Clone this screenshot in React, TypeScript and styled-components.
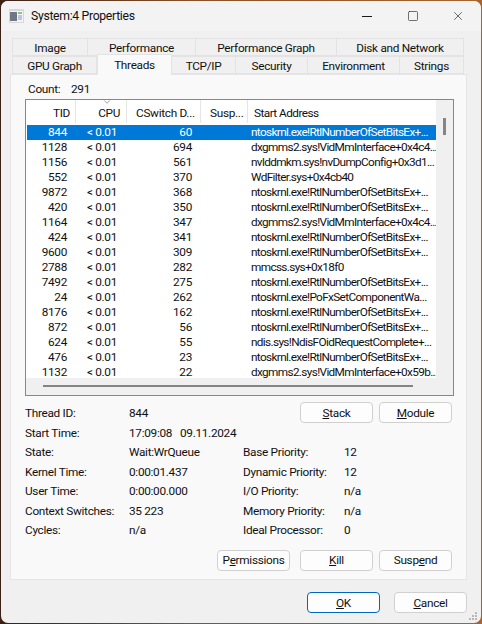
import React from 'react';
import styled, { createGlobalStyle } from 'styled-components';
import { Square, X, ChevronDown } from 'lucide-react';

const GlobalStyle = createGlobalStyle`
  html, body {
    margin: 0;
    height: 100%;
    overflow: hidden;
    background: linear-gradient(90deg, #3a2016 0%, #8a5028 40%, #a8642e 100%);
  }
  body {
    font-family: Roboto, "Noto Sans", sans-serif;
    font-size: 11.8px;
    letter-spacing: -0.3px;
    color: #111;
  }
`;

const Win = styled.div`
  box-sizing: border-box;
  margin: 1px;
  height: 622px;
  border-radius: 7px;
  background: #f0f0f0;
  display: flex;
  flex-direction: column;
  position: relative;
  overflow: hidden;
`;

const TitleBar = styled.div`
  height: 30px;
  background: #f3f3f3;
  display: flex;
  align-items: center;
  padding: 0 16px 0 8px;
  flex-shrink: 0;
`;

const AppIcon = styled.svg`
  width: 15px;
  height: 14px;
  margin-right: 7px;
  margin-top: -1px;
`;

const Title = styled.div`
  flex: 1;
  margin-top: -1px;
  font-size: 12.2px;
`;

const WinButtons = styled.div`
  display: flex;
  align-items: center;
  svg { display: block; color: #1a1a1a; }
`;

const MinLine = styled.div`
  width: 10px;
  height: 1px;
  background: #1a1a1a;
  margin-right: 35px;
`;

const MaxIcon = styled(Square)`
  margin-right: 32px;
`;

const TabArea = styled.div`
  padding: 7px 0 0 11px;
  width: 452px;
  position: relative;
  z-index: 1;
`;

const TabRow = styled.div`
  display: flex;
  height: 18px;
`;

const Tab = styled.div<{ $w: number; $active?: boolean }>`
  box-sizing: border-box;
  width: ${(p) => p.$w}px;
  display: flex;
  align-items: center;
  justify-content: center;
  background: ${(p) => (p.$active ? '#f9f9f9' : '#f0f0f0')};
  border: 1px solid #e3e3e3;
  border-left-width: ${(p) => (p.$active ? 1 : 0)}px;
  border-bottom: ${(p) => (p.$active ? '0' : '1px solid #e3e3e3')};
  height: ${(p) => (p.$active ? 21 : 18)}px;
  margin-top: ${(p) => (p.$active ? -2 : 0)}px;
  padding: ${(p) => (p.$active ? '0 0 1px' : '1px 0 0')};
  position: relative;
  z-index: ${(p) => (p.$active ? 2 : 0)};
  &:first-child { border-left-width: 1px; }
`;

const Panel = styled.div`
  box-sizing: border-box;
  margin-left: 9px;
  width: 457px;
  height: 506px;
  border: 1px solid #e5e5e5;
  background: #f9f9f9;
  padding: 6px 14px 0 14px;
  flex-shrink: 0;
  display: flex;
  flex-direction: column;
`;

const CountRow = styled.div`
  box-sizing: border-box;
  display: grid;
  grid-template-columns: 43px 1fr;
  height: 18px;
  align-items: center;
  padding: 0 0 2px 3px;
`;

const ListBox = styled.div`
  box-sizing: border-box;
  width: 429px;
  height: 297px;
  border: 1px solid #828790;
  background: #fff;
  display: grid;
  grid-template-columns: 1fr 17px;
  grid-template-rows: 1fr 17px;
`;

const ListMain = styled.div`
  padding-left: 1px;
  overflow: hidden;
`;

const HeaderRow = styled.div`
  display: grid;
  grid-template-columns: 49px 51px 74px 47px 1fr;
  height: 25px;
`;

const HeaderCell = styled.div<{ $right?: boolean; $pad: number; $tight?: boolean }>`
  box-sizing: border-box;
  height: 23px;
  display: flex;
  align-items: center;
  justify-content: ${(p) => (p.$right ? 'flex-end' : 'flex-start')};
  padding: ${(p) => (p.$right ? `2px ${p.$pad}px 0 0` : `2px 0 0 ${p.$pad}px`)};
  border-right: 1px solid #e5e5e5;
  letter-spacing: ${(p) => (p.$tight ? '-0.55px' : 'inherit')};
  position: relative;
  &:last-child { border-right: 0; }
`;

const SortArrow = styled(ChevronDown)`
  position: absolute;
  top: -3px;
  left: 26px;
  color: #8a8a8a;
`;

const Row = styled.div<{ $selected?: boolean }>`
  display: grid;
  grid-template-columns: 49px 51px 74px 47px 1fr;
  height: 15px;
  line-height: 15px;
  white-space: nowrap;
  background: ${(p) => (p.$selected ? '#0078d7' : 'transparent')};
  color: ${(p) => (p.$selected ? '#fff' : '#111')};
`;

const NumCell = styled.div<{ $pad: number }>`
  text-align: right;
  padding-right: ${(p) => p.$pad}px;
`;

const AddrCell = styled.div`
  padding-left: 3px;
  letter-spacing: -0.65px;
`;

const VTrack = styled.div`
  grid-column: 2;
  grid-row: 1;
  background: #f0f0f0;
  padding-top: 18px;
  display: flex;
  justify-content: center;
`;

const VThumb = styled.div`
  width: 3px;
  height: 17px;
  background: #858585;
`;

const HTrack = styled.div`
  grid-column: 1 / span 2;
  grid-row: 2;
  background: #f0f0f0;
  padding: 7px 0 0 17px;
`;

const HThumb = styled.div`
  width: 370px;
  height: 2px;
  background: #858585;
`;

const Details = styled.div`
  position: relative;
  display: flex;
  padding-top: 8px;
`;

const InfoColumn = styled.div<{ $w: number }>`
  width: ${(p) => p.$w}px;
`;

const RightColumn = styled.div`
  padding-top: 39px;
`;

const Info = styled.div<{ $label: number }>`
  display: grid;
  grid-template-columns: ${(p) => p.$label}px 1fr;
  height: 19.5px;
  line-height: 19px;
  white-space: pre;
`;

const ButtonGroup = styled.div`
  position: absolute;
  top: 6px;
  right: 0;
  display: flex;
  gap: 6px;
`;

const Button = styled.div<{ $default?: boolean }>`
  box-sizing: border-box;
  width: 73px;
  height: 21px;
  display: flex;
  align-items: center;
  justify-content: center;
  background: #fdfdfd;
  border: 1px solid ${(p) => (p.$default ? '#0067c0' : '#d0d0d0')};
  border-radius: 4px;
  u { text-underline-offset: 1px; }
`;

const ActionRow = styled.div`
  display: flex;
  margin: 9px 0 0 192px;
  gap: 10px;
`;

const ActionRight = styled.div`
  display: flex;
  gap: 6px;
`;

const Footer = styled.div`
  display: flex;
  justify-content: flex-end;
  gap: 14px;
  margin: 12px 14px 0 0;
`;

const Grip = styled.svg`
  position: absolute;
  right: 3px;
  bottom: 2px;
  width: 9px;
  height: 9px;
`;

const RTL = 'ntoskrnl.exe!RtlNumberOfSetBitsEx+...';
const VID = 'dxgmms2.sys!VidMmInterface+0x4c4...';

const rows: [string, string, string][] = [
  ['844', '60', RTL],
  ['1128', '694', VID],
  ['1156', '561', 'nvlddmkm.sys!nvDumpConfig+0x3d1...'],
  ['552', '370', 'WdFilter.sys+0x4cb40'],
  ['9872', '368', RTL],
  ['420', '350', RTL],
  ['1164', '347', VID],
  ['424', '341', RTL],
  ['9600', '309', RTL],
  ['2788', '282', 'mmcss.sys+0x18f0'],
  ['7492', '275', RTL],
  ['24', '262', 'ntoskrnl.exe!PoFxSetComponentWa...'],
  ['8176', '162', RTL],
  ['872', '56', RTL],
  ['624', '55', 'ndis.sys!NdisFOidRequestComplete+...'],
  ['476', '23', RTL],
  ['1132', '22', 'dxgmms2.sys!VidMmInterface+0x59b...'],
];

const leftInfo = [
  ['Thread ID:', '844'],
  ['Start Time:', '17:09:08   09.11.2024'],
  ['State:', 'Wait:WrQueue'],
  ['Kernel Time:', '0:00:01.437'],
  ['User Time:', '0:00:00.000'],
  ['Context Switches:', '35 223'],
  ['Cycles:', 'n/a'],
];

const rightInfo = [
  ['Base Priority:', '12'],
  ['Dynamic Priority:', '12'],
  ['I/O Priority:', 'n/a'],
  ['Memory Priority:', 'n/a'],
  ['Ideal Processor:', '0'],
];

export default function App() {
  return (
    <Win>
      <GlobalStyle />
      <TitleBar>
        <AppIcon viewBox="0 0 15 14">
          <rect width="15" height="14" fill="#d6d6dc" />
          <rect x="1" y="2" width="13" height="11" fill="#f4f4f6" />
          <rect x="1" y="3" width="7" height="9" fill="#6f7684" />
          <rect x="9" y="3" width="4" height="2" fill="#8fc08a" />
          <rect x="9" y="6" width="4" height="5" fill="#b9c6e6" />
        </AppIcon>
        <Title>System:4 Properties</Title>
        <WinButtons>
          <MinLine />
          <MaxIcon size={12} strokeWidth={1.2} />
          <X size={14} strokeWidth={1.1} />
        </WinButtons>
      </TitleBar>
      <TabArea>
        <TabRow>
          <Tab $w={76}>Image</Tab>
          <Tab $w={108}>Performance</Tab>
          <Tab $w={141}>Performance Graph</Tab>
          <Tab $w={127}>Disk and Network</Tab>
        </TabRow>
        <TabRow>
          <Tab $w={85}>GPU Graph</Tab>
          <Tab $w={75} $active>Threads</Tab>
          <Tab $w={64}>TCP/IP</Tab>
          <Tab $w={72}>Security</Tab>
          <Tab $w={92}>Environment</Tab>
          <Tab $w={64}>Strings</Tab>
        </TabRow>
      </TabArea>
      <Panel>
        <CountRow>
          <span>Count:</span>
          <span>291</span>
        </CountRow>
        <ListBox>
          <ListMain>
            <HeaderRow>
              <HeaderCell $right $pad={5}>TID</HeaderCell>
              <HeaderCell $right $pad={6}>
                <SortArrow size={10} />
                CPU
              </HeaderCell>
              <HeaderCell $pad={9}>CSwitch D...</HeaderCell>
              <HeaderCell $pad={9}>Susp...</HeaderCell>
              <HeaderCell $pad={6} $tight>Start Address</HeaderCell>
            </HeaderRow>
            {rows.map(([tid, cs, addr], i) => (
              <Row key={tid} $selected={i === 0}>
                <NumCell $pad={9}>{tid}</NumCell>
                <NumCell $pad={10}>&lt; 0.01</NumCell>
                <NumCell $pad={9}>{cs}</NumCell>
                <div />
                <AddrCell>{addr}</AddrCell>
              </Row>
            ))}
          </ListMain>
          <VTrack>
            <VThumb />
          </VTrack>
          <HTrack>
            <HThumb />
          </HTrack>
        </ListBox>
        <Details>
          <ButtonGroup>
            <Button><u>S</u>tack</Button>
            <Button><u>M</u>odule</Button>
          </ButtonGroup>
          <InfoColumn $w={218}>
            {leftInfo.map(([k, v]) => (
              <Info key={k} $label={104}>
                <span>{k}</span>
                <span>{v}</span>
              </Info>
            ))}
          </InfoColumn>
          <RightColumn>
            {rightInfo.map(([k, v]) => (
              <Info key={k} $label={101}>
                <span>{k}</span>
                <span>{v}</span>
              </Info>
            ))}
          </RightColumn>
        </Details>
        <ActionRow>
          <Button>P<u>e</u>rmissions</Button>
          <ActionRight>
            <Button><u>K</u>ill</Button>
            <Button>Susp<u>e</u>nd</Button>
          </ActionRight>
        </ActionRow>
      </Panel>
      <Footer>
        <Button $default><u>O</u>K</Button>
        <Button><u>C</u>ancel</Button>
      </Footer>
      <Grip viewBox="0 0 9 9">
        <g fill="#b8b8b8">
          <rect x="6" y="0" width="2" height="2" />
          <rect x="3" y="3" width="2" height="2" />
          <rect x="6" y="3" width="2" height="2" />
          <rect x="0" y="6" width="2" height="2" />
          <rect x="3" y="6" width="2" height="2" />
          <rect x="6" y="6" width="2" height="2" />
        </g>
      </Grip>
    </Win>
  );
}
